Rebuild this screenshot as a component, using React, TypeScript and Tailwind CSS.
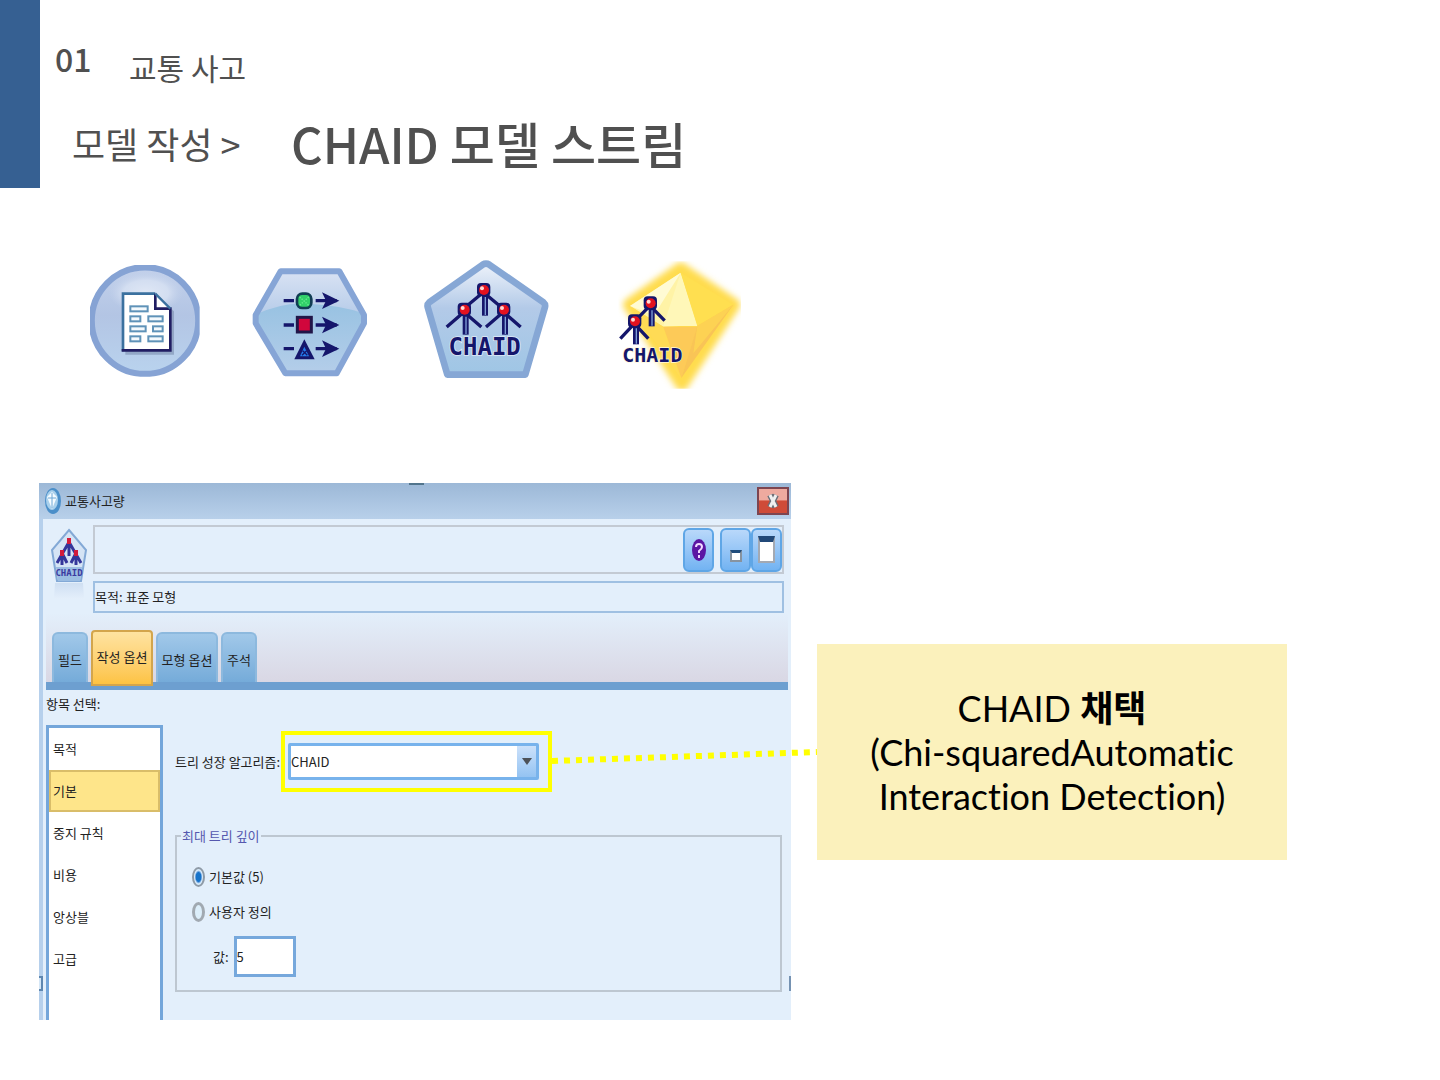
import React from "react";

const NAVY = "#15166b";

function Branch({ x, y, drop = 72, spread = 50 }: { x: number; y: number; drop?: number; spread?: number }) {
  return (
    <g>
      <path
        d={`M${x} ${y + 8} L${x - spread} ${y + 53} M${x} ${y + 8} L${x + spread} ${y + 53}`}
        stroke={NAVY}
        strokeWidth="10"
        fill="none"
      />
      <path d={`M${x + 5} ${y + 12} V${y + drop}`} stroke={NAVY} strokeWidth="18" />
      <path d={`M${x + 6} ${y + 22} V${y + drop - 2}`} stroke="#7f9fd8" strokeWidth="4" />
      <rect x={x - 19} y={y - 20} width="40" height="40" rx="12" fill={NAVY} />
      <circle cx={x + 2} cy={y + 1} r="15" fill="#e3121f" />
      <circle cx={x - 4} cy={y - 4} r="6" fill="#ffd9d4" />
    </g>
  );
}

function SourceNode() {
  const cells = [
    [178, 166, 56], [178, 196, 34], [232, 196, 47], [178, 226, 50],
    [246, 226, 33], [178, 256, 34], [232, 256, 47],
  ];
  return (
    <svg viewBox="57 24 336 396" className="h-[132px] w-[112px]" role="img" aria-label="데이터 소스">
      <defs>
        <linearGradient id="disc" x1="0" y1="0" x2="0" y2="1">
          <stop offset="0" stopColor="#c3d1eb" />
          <stop offset=".45" stopColor="#b3c5e4" />
          <stop offset="1" stopColor="#b9d3ee" />
        </linearGradient>
        <radialGradient id="shine">
          <stop offset="0" stopColor="#dfe7f5" />
          <stop offset=".6" stopColor="#d3def1" />
          <stop offset="1" stopColor="#c3d1ea" stopOpacity="0" />
        </radialGradient>
        <clipPath id="discClip"><rect x="60" y="45" width="329" height="335" /></clipPath>
      </defs>
      <g clipPath="url(#discClip)">
        <circle cx="225" cy="212" r="160" fill="url(#disc)" stroke="#86a3d4" strokeWidth="19" />
      </g>
      <ellipse cx="228" cy="128" rx="112" ry="62" fill="url(#shine)" />
      <path d="M166 138 H262 L312 184 V314 H166Z" fill="#7486a8" opacity=".55" />
      <path d="M159 131 H256 L301 176 V302 H159Z" fill="#fff" />
      <path d="M159 304 V131 H256" fill="none" stroke="#3b719f" strokeWidth="8" />
      <path d="M256 131 V176 H301 V301 H155" fill="none" stroke="#211e63" strokeWidth="8" />
      <path d="M256 131 L301 176" stroke="#3b719f" strokeWidth="7" />
      {cells.map(([x, y, w]) => (
        <rect key={`${x}-${y}`} x={x + 3} y={y + 3} width={w - 4} height="15" fill="#f4f9fd" stroke="#5f92b8" strokeWidth="6" />
      ))}
    </svg>
  );
}

function TypeNode() {
  return (
    <svg viewBox="543 24 354 396" className="h-[132px] w-[118px]" role="img" aria-label="유형">
      <defs>
        <linearGradient id="hexTop" x1="0" y1="0" x2="0" y2="1">
          <stop offset="0" stopColor="#dbe4f4" />
          <stop offset="1" stopColor="#b4cae8" />
        </linearGradient>
        <linearGradient id="hexBottom" x1="0" y1="0" x2="0" y2="1">
          <stop offset="0" stopColor="#98c2e2" />
          <stop offset="1" stopColor="#b7cfea" />
        </linearGradient>
        <clipPath id="hexClip"><path d="M632 64 H808 L882 195 V220 L800 370 H646 L557 220 V195Z" /></clipPath>
      </defs>
      <g clipPath="url(#hexClip)">
        <rect x="543" y="54" width="354" height="150" fill="url(#hexTop)" />
        <path d="M543 200 Q640 152 720 162 Q820 166 897 196 V390 H543Z" fill="url(#hexBottom)" />
      </g>
      <path d="M632 64 H808 L882 195 V220 L800 370 H646 L557 220 V195Z" fill="none" stroke="#86a5d6" strokeWidth="18" strokeLinejoin="round" />
      {[152, 225, 296].map((y) => (
        <g key={y}>
          <path d={`M641 ${y} H672 M737 ${y} H800`} stroke={NAVY} strokeWidth="10" />
          <path d={`M756 ${y - 25} L808 ${y} L756 ${y + 25} L768 ${y}Z`} fill={NAVY} />
        </g>
      ))}
      <rect x="681" y="131" width="43" height="43" rx="16" fill="#31cf69" stroke="#123d54" strokeWidth="8" />
      <path d="M689 141 l27 25 M716 141 l-27 25" stroke="#69ed91" strokeWidth="4" strokeDasharray="4 4" />
      <rect x="682" y="202" width="42" height="44" fill="#d1063c" stroke="#211648" strokeWidth="9" />
      <path d="M703 268 L734 328 H673Z" fill={NAVY} />
      <path d="M703 290 L717 319 H690Z" fill="#247dec" />
      <path d="M696 316 l14 -14 M698 302 l14 14" stroke={NAVY} strokeWidth="4" />
    </svg>
  );
}

function ModelNode() {
  return (
    <svg viewBox="57 24 396 396" className="h-[132px] w-[132px]" role="img" aria-label="CHAID 모델 노드">
      <defs>
        <linearGradient id="pentFill" x1="0" y1="0" x2="0" y2="1">
          <stop offset="0" stopColor="#edf2fa" />
          <stop offset=".4" stopColor="#b3cae8" />
          <stop offset="1" stopColor="#9fc6e5" />
        </linearGradient>
      </defs>
      <path d="M258 41 Q263 41 268 44 L430 157 Q437 163 435 171 L376 374 H142 L83 171 Q81 163 88 157 L248 44 Q253 41 258 41Z" fill="url(#pentFill)" stroke="#86a7d5" strokeWidth="20" strokeLinejoin="round" />
      <Branch x={250} y={119} drop={78} spread={54} />
      <Branch x={192} y={178} drop={76} spread={52} />
      <Branch x={310} y={178} drop={76} spread={52} />
      <text x="254" y="316" textAnchor="middle" fill={NAVY} stroke="#dfe9f7" strokeWidth="5" paintOrder="stroke" className="font-['DejaVu_Sans_Mono'] text-[72px] font-bold">CHAID</text>
    </svg>
  );
}

function NuggetNode() {
  return (
    <svg viewBox="603 24 423 396" className="h-[132px] w-[141px]" role="img" aria-label="CHAID 모델 너깃">
      <defs>
        <filter id="glow" x="-20%" y="-20%" width="140%" height="140%"><feGaussianBlur stdDeviation="9" /></filter>
        <clipPath id="nuggetClip"><rect x="655" y="34" width="368" height="382" /></clipPath>
      </defs>
      <g clipPath="url(#nuggetClip)">
        <path d="M842 56 L1002 164 L846 404 L688 164Z" fill="#ffdc4d" stroke="#ffdc4d" strokeWidth="38" strokeLinejoin="round" filter="url(#glow)" />
        <path d="M842 68 L690 168 L790 230 L892 226Z" fill="#fff3a6" />
        <path d="M842 68 L690 168 L762 196Z" fill="#fffbd4" />
        <path d="M842 68 L892 228 H790Z" fill="#fff7b8" />
        <path d="M842 68 L1000 164 L892 228Z" fill="#ffdf50" />
        <path d="M690 168 L790 230 L842 384Z" fill="#ffdb55" />
        <path d="M790 230 H892 L844 384Z" fill="#fdca58" />
        <path d="M892 228 L1000 164 L844 384Z" fill="#f9c456" />
        <path d="M892 228 L1000 164 L880 310Z" fill="#ffd953" opacity=".7" />
      </g>
      <Branch x={750} y={159} drop={70} spread={44} />
      <Branch x={703} y={213} drop={70} spread={42} />
      <text x="757" y="335" textAnchor="middle" fill={NAVY} stroke="#fff8dc" strokeWidth="4" paintOrder="stroke" className="font-['DejaVu_Sans_Mono'] text-[60px] font-bold">CHAID</text>
    </svg>
  );
}

function SmallModelIcon() {
  return (
    <svg viewBox="0 0 38 76" className="h-[76px] w-[38px] shrink-0" aria-hidden="true">
      <defs>
        <linearGradient id="mirror" x1="0" y1="0" x2="0" y2="1">
          <stop offset="0" stopColor="#cfdff2" />
          <stop offset="1" stopColor="#e4effb" />
        </linearGradient>
      </defs>
      <path d="M5 58 H33 L34 74 H4Z" fill="url(#mirror)" />
      <path d="M19 5 L36 25 L31 56 H7 L2 25Z" fill="#d5e4f5" stroke="#83a9d6" strokeWidth="2" />
      <path d="M6 42 H32 L30 56 H8Z" fill="#9bbde2" />
      <path d="M19 17 L7 38 M19 17 L31 38 M19 18 V31 M12 28 V40 M26 28 V40 M12 28 L17 38 M26 28 L21 38" stroke="#34369a" strokeWidth="3" fill="none" />
      <rect x="17" y="13" width="4" height="6" fill="#d31b3c" />
      <rect x="10" y="25" width="4" height="6" fill="#d31b3c" />
      <rect x="24" y="25" width="4" height="6" fill="#d31b3c" />
      <text x="19" y="51" textAnchor="middle" fill="#3a3aa0" className="font-['DejaVu_Sans_Mono'] text-[9px] font-bold">CHAID</text>
    </svg>
  );
}

const toolButton =
  "flex h-[44px] w-[31px] items-center justify-center rounded-md border-2 border-[#5fa6e6] bg-linear-to-b from-[#b9d8fa] to-[#72b3f2]";

const tabs = [
  { name: "필드", width: "w-[36px]" },
  { name: "작성 옵션", width: "w-[62px]" },
  { name: "모형 옵션", width: "w-[62px]" },
  { name: "주석", width: "w-[36px]" },
];

const sections = ["목적", "기본", "중지 규칙", "비용", "앙상블", "고급"];

function Dialog() {
  return (
    <section className="relative flex min-h-[537px] flex-col overflow-hidden bg-[#e3effb] text-[13px] leading-5 text-[#222]">
      <header className="flex h-[36px] shrink-0 items-center bg-linear-to-b from-[#9cb8d7] to-[#b8d0ea] pr-[2px] pl-[6px]">
        <svg viewBox="0 0 16 26" className="h-[26px] w-[16px]" aria-hidden="true">
          <ellipse cx="8" cy="13" rx="8" ry="13" fill="#4b8fc9" />
          <ellipse cx="7" cy="12" rx="6" ry="10" fill="#a9d0ec" />
          <path d="M7 4 L12 9 L7 21 L2 9Z" fill="#f5fbff" />
          <path d="M3 10 H11 M7 5 V20" stroke="#6fa8d6" />
        </svg>
        <h2 className="ml-[4px] flex-1">교통사고량</h2>
        <button aria-label="닫기" className="flex h-[28px] w-[32px] items-center justify-center border-2 border-[#7d4550] bg-linear-to-b from-[#eeaa9f] from-45% to-[#cf4b38] to-50%">
          <svg viewBox="0 0 14 16" className="h-[16px] w-[14px]" aria-hidden="true">
            <path d="M4 2 L10 14 M10 2 L4 14" stroke="#6b6f78" strokeWidth="6" />
            <path d="M4 2 L10 14 M10 2 L4 14" stroke="#f0f0f0" strokeWidth="3" />
          </svg>
        </button>
      </header>

      <div className="flex flex-1 flex-col border-l-4 border-[#b6d0ec]">
        <div className="flex pt-[6px] pr-[7px] pl-[7px]">
          <SmallModelIcon />
          <div className="ml-[5px] flex flex-1 flex-col gap-[7px]">
            <div className="flex h-[49px] items-center justify-end border-2 border-[#c3cad3]">
              <button aria-label="도움말" className={toolButton}>
                <svg viewBox="0 0 16 24" className="h-[24px] w-[16px]" aria-hidden="true">
                  <ellipse cx="8" cy="12" rx="7" ry="11" fill="#5b16a3" />
                  <path d="M5 9 Q5 6 8 6 Q11 6 11 9 Q11 11 8 13 V15 M8 17 V20" fill="none" stroke="#f1d9ff" strokeWidth="2" />
                </svg>
              </button>
              <button aria-label="최소화" className={`${toolButton} ml-[6px]`}>
                <span className="mt-[12px] h-[12px] w-[12px] border-2 border-t-3 border-[#8793a0] border-t-[#214d7c] bg-white" />
              </button>
              <button aria-label="최대화" className={toolButton}>
                <span className="h-[27px] w-[17px] border-2 border-t-6 border-[#a3a9b3] border-t-[#214878] bg-white" />
              </button>
            </div>
            <p className="flex h-[32px] items-center border-2 border-[#9fc0e2]">목적: 표준 모형</p>
          </div>
        </div>

        <div role="tablist" className="mr-[3px] ml-[3px] flex h-[77px] items-end gap-[3px] border-b-8 border-[#6d9fd0] bg-linear-to-b from-[#e3effb] to-[#d9d7e4] pl-[6px]">
          {tabs.map((tab) =>
            tab.name === "작성 옵션" ? (
              <button key={tab.name} role="tab" aria-selected="true" className="relative -mb-[4px] h-[56px] w-[62px] rounded-t-sm border-2 border-[#d3a54c] bg-linear-to-b from-[#fee3a0] to-[#fdc342] pb-[2px] whitespace-nowrap">
                {tab.name}
              </button>
            ) : (
              <button key={tab.name} role="tab" aria-selected="false" className={`${tab.width} h-[50px] rounded-t-md border-2 border-b-0 border-[#8db9de] bg-linear-to-b from-[#a1c8e9] to-[#75abd9] pt-[4px] whitespace-nowrap`}>
                <span className="-mx-2">{tab.name}</span>
              </button>
            ),
          )}
        </div>

        <div className="flex flex-1 pl-[3px]">
          <nav aria-labelledby="sections-label" className="flex w-[117px] shrink-0 flex-col">
            <h3 id="sections-label" className="mt-[4px] mb-[11px]">항목 선택:</h3>
            <ul className="flex-1 border-3 border-b-0 border-[#74a6da] bg-white">
              {sections.map((name) => (
                <li key={name}>
                  <button className={`flex h-[42px] w-full items-center border-2 pl-[2px] ${name === "기본" ? "border-[#d9bd69] bg-[#fee58a]" : "border-transparent"}`}>
                    {name}
                  </button>
                </li>
              ))}
            </ul>
          </nav>

          <div className="flex-1 pt-[41px] pr-[9px] pb-[28px] pl-[12px]">
            <div className="flex items-center">
              <label htmlFor="algorithm" className="w-[106px] whitespace-nowrap">트리 성장 알고리즘:</label>
              <div className="w-[271px] border-4 border-[#ffff00] bg-[#e3effb] py-[8px] pr-[9px] pl-[3px]">
                <div className="relative">
                  <select id="algorithm" className="h-[37px] w-full appearance-none rounded-xs border-3 border-[#78b3ec] bg-white">
                    <option>CHAID</option>
                  </select>
                  <span className="pointer-events-none absolute top-[3px] right-[3px] flex h-[31px] w-[19px] items-center justify-center bg-linear-to-b from-[#cce1fa] to-[#94c3f2]">
                    <span className="border-x-5 border-t-7 border-x-transparent border-t-[#4c5158]" />
                  </span>
                </div>
              </div>
            </div>

            <fieldset className="mt-[34px] h-[166px] border-2 border-[#bdc7d1] pl-[15px]">
              <legend className="-ml-[11px] px-[1px] text-[#5558ae]">최대 트리 깊이</legend>
              <div className="mt-[21px] flex items-center gap-[4px]">
                <input id="depth-default" type="radio" name="depth" defaultChecked className="h-[20px] w-[13px] appearance-none rounded-[50%] border-2 border-[#8e9aa6] bg-white bg-radial from-[#1673c9] from-40% to-[#d9ecfb] to-60%" />
                <label htmlFor="depth-default">기본값 (5)</label>
              </div>
              <div className="mt-[15px] flex items-center gap-[4px]">
                <input id="depth-custom" type="radio" name="depth" className="h-[20px] w-[13px] appearance-none rounded-[50%] border-3 border-[#a1a9b1] bg-[#dceefa]" />
                <label htmlFor="depth-custom">사용자 정의</label>
              </div>
              <div className="mt-[14px] flex items-center gap-[5px] pl-[21px]">
                <label htmlFor="depth-value">값:</label>
                <input id="depth-value" defaultValue="5" className="h-[41px] w-[62px] border-3 border-[#76a8dc] bg-white" />
              </div>
            </fieldset>
          </div>
        </div>
      </div>
      <span className="absolute top-0 left-[370px] h-[2px] w-[15px] bg-[#52758d]" />
      <span className="absolute bottom-[29px] left-0 h-[15px] w-[4px] border-2 border-l-0 border-[#5e87b0] bg-[#d5e7f7]" />
      <span className="absolute right-0 bottom-[29px] h-[15px] w-[2px] bg-[#7592b2]" />
    </section>
  );
}

export default function App() {
  return (
    <main className="min-h-screen bg-white pb-[60px] font-['Noto_Sans_CJK_KR',sans-serif]">
      <header className="flex h-[188px] text-[#505050]">
        <div className="w-[40px] shrink-0 bg-[#366092]" />
        <div className="pl-[15px]">
          <div className="flex items-start pt-[34px]">
            <span className="w-[74px] text-[32px] leading-[48px] font-medium">01</span>
            <span className="pt-[9px] text-[30px] leading-[48px]">교통 사고</span>
          </div>
          <div className="mt-[20px] flex items-center pl-[17px]">
            <span className="w-[219px] text-[36px] leading-[64px]">모델 작성 &gt;</span>
            <h1 className="text-[49px] leading-[64px] font-medium">CHAID 모델 스트림</h1>
          </div>
        </div>
      </header>

      <div className="mt-[70px] flex gap-[50px] pl-[89px]">
        <SourceNode />
        <TypeNode />
        <ModelNode />
        <NuggetNode />
      </div>

      <div className="mt-[93px] grid grid-cols-[8fr_5fr] items-start gap-[26px] pr-[153px] pl-[39px]">
        <Dialog />
        <aside className="relative mt-[161px] bg-[#fbf1bc] py-[42px] text-center font-[Lato,'Noto_Sans_CJK_KR',sans-serif] text-[36px] leading-[44px] text-black [font-variant-ligatures:none]">
          <svg viewBox="0 0 265 18" className="absolute top-[103px] right-full h-[18px] w-[265px]" aria-hidden="true">
            <path d="M0 14 L265 5" stroke="#ffff00" strokeWidth="6" strokeDasharray="6 6" />
          </svg>
          <p>CHAID <b>채택</b></p>
          <p>(Chi-squaredAutomatic</p>
          <p>Interaction Detection)</p>
        </aside>
      </div>
    </main>
  );
}
